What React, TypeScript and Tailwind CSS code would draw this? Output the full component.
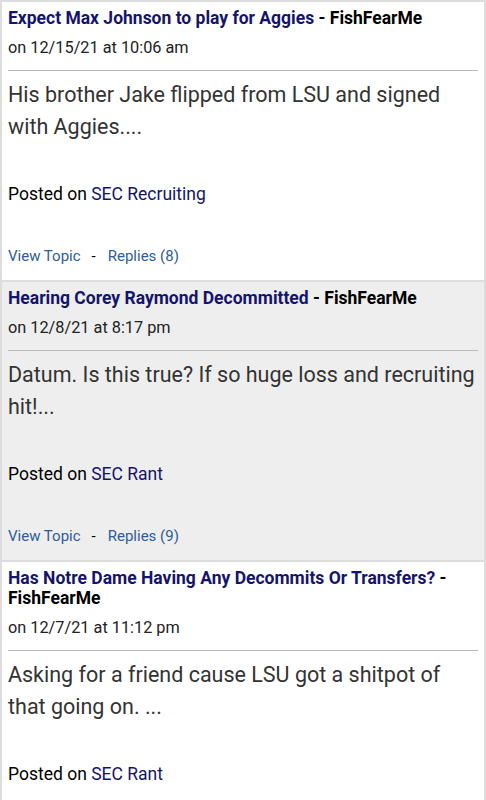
const posts = [
  {
    title: "Expect Max Johnson to play for Aggies",
    author: "FishFearMe",
    date: "on 12/15/21 at 10:06 am",
    body: "His brother Jake flipped from LSU and signed with Aggies....",
    board: "SEC Recruiting",
    replies: 8,
  },
  {
    title: "Hearing Corey Raymond Decommitted",
    author: "FishFearMe",
    date: "on 12/8/21 at 8:17 pm",
    body: "Datum. Is this true? If so huge loss and recruiting hit!...",
    board: "SEC Rant",
    replies: 9,
  },
  {
    title: "Has Notre Dame Having Any Decommits Or Transfers?",
    author: "FishFearMe",
    date: "on 12/7/21 at 11:12 pm",
    body: "Asking for a friend cause LSU got a shitpot of that going on. ...",
    board: "SEC Rant",
    replies: 3,
  },
];

export default function App() {
  return (
    <div className="min-h-screen bg-white font-['Roboto',sans-serif]">
      <div className="border-x-2 border-t-2 border-[#dddddd]">
        {posts.map((post, i) => (
          <div
            key={post.title}
            className={`border-b-2 border-[#dddddd] px-[6px] pt-[6px] pb-[14px] ${
              i % 2 === 1 ? "bg-[#eeeeee]" : "bg-white"
            }`}
          >
            <div className="text-[17.5px] leading-[20px] font-bold">
              <a href="#" className="text-[#14146c]">
                {post.title}
              </a>
              <span className="text-black"> - {post.author}</span>
            </div>
            <div className="mt-[10px] text-[16.3px] leading-[20px] text-[#222222]">
              {post.date}
            </div>
            <hr className="mt-[12px] border-t border-[#bbbbbb]" />
            <p className="mt-[8px] text-[21.5px] leading-[32px] text-[#333333]">
              {post.body}
            </p>
            <div className="mt-[41px] text-[17.5px] leading-[20px] text-black">
              Posted on{" "}
              <a href="#" className="text-[#14146c]">
                {post.board}
              </a>
            </div>
            <div className="mt-[42px] text-[15px] leading-[20px] text-[#2e5c96]">
              <a href="#">View Topic</a>
              <span className="ml-[11px] mr-[12px] text-black">-</span>
              <a href="#">Replies ({post.replies})</a>
            </div>
          </div>
        ))}
      </div>
    </div>
  );
}
